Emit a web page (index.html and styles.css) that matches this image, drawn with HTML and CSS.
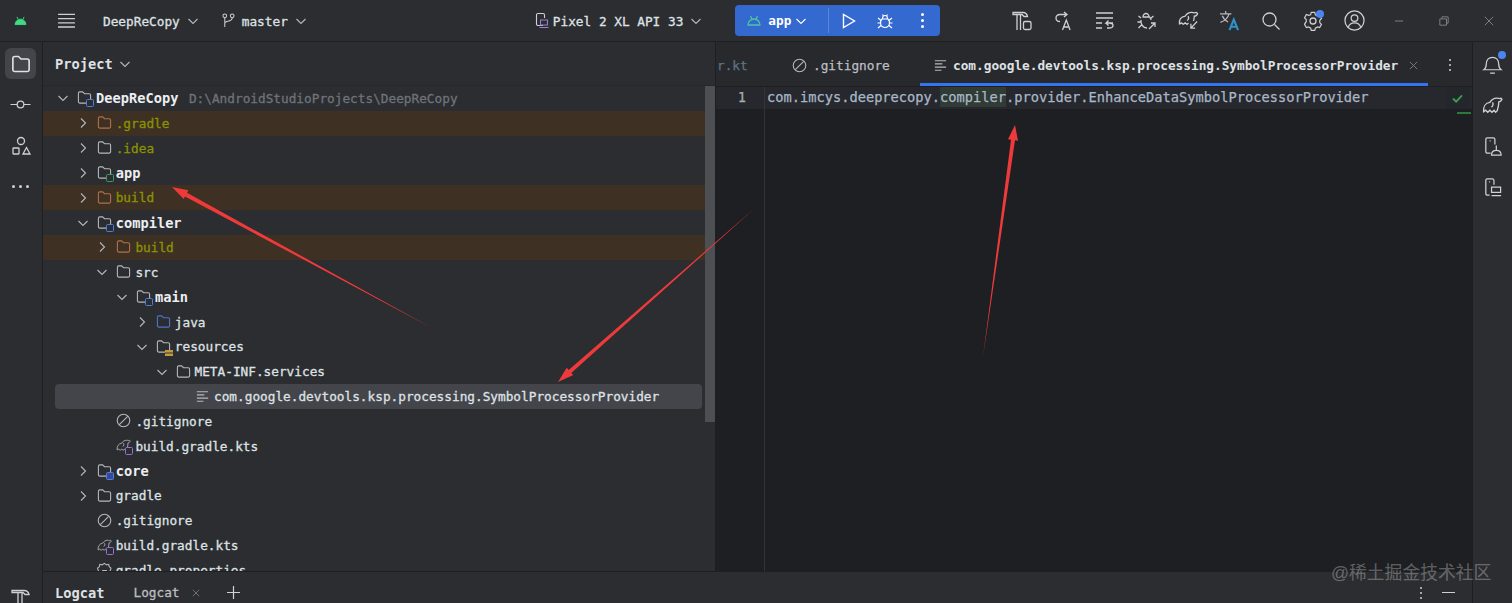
FILE: index.html
```html
<!DOCTYPE html>
<html lang="en">
<head>
<meta charset="utf-8">
<title>DeepReCopy</title>
<link rel="stylesheet" href="styles.css">
</head>
<body>
<svg class="sprite" xmlns="http://www.w3.org/2000/svg">
  <defs>
    <symbol id="chev-d" viewBox="0 0 12 12"><path d="M1.5 4l4.5 4.5L10.500 4"/></symbol>
    <symbol id="chev-r" viewBox="0 0 12 12"><path d="M4 1.500L8.500 6 4 10.500"/></symbol>
    <symbol id="folder" viewBox="0 0 16 16"><path d="M1.500 3.500a1.500 1.500 0 0 1 1.500-1.500h3l2 2h5a1.500 1.500 0 0 1 1.500 1.500v7a1.500 1.500 0 0 1-1.500 1.500h-10a1.500 1.500 0 0 1-1.500-1.500z"/></symbol>
    <symbol id="nope" viewBox="0 0 16 16"><circle cx="8" cy="8" r="6.700"/><path d="M3.500 12.500l9-9"/></symbol>
    <symbol id="lines" viewBox="0 0 16 16"><path d="M2 3h12M2 6.300h8M2 9.700h12M2 13h7"/></symbol>
    <symbol id="elephant" viewBox="0 0 20 20"><path d="M1.500 16C1 11 3.500 7.500 7.500 7 9 4.500 11.500 3 14 3c2 0 3 1 4 0l1 1c-.5 2-2 2.500-3 2.500 0 3-.5 5.500-1.500 8.500L13 16.500l-1.500-2-2 2-2-2-2 2-2-2zM10 7c1 1.500.5 3.500-1 4.500"/></symbol>
  </defs>
</svg>

<div class="app">
  <header class="topbar">
    <div class="logo-slot">
      <svg class="i-logo" viewBox="0 0 14 10"><path class="f-green" d="M1 9.500a6 6 0 0 1 12 0zM3 1l1.500 3M11 1L9.500 4"/></svg>
    </div>
    <svg class="i-menu" viewBox="0 0 18 16"><path d="M0 1.500h18M0 6h18M0 10.500h18M0 15h18"/></svg>
    <span class="tb-label project-name">DeepReCopy</span>
    <svg class="chev tb-chev"><use href="#chev-d"/></svg>
    <svg class="i-branch" viewBox="0 0 14 16"><circle cx="3" cy="3" r="2"/><circle cx="11" cy="3" r="2"/><path d="M3 5v10M3 11c0-3 8-1 8-6"/></svg>
    <span class="tb-label branch-name">master</span>
    <svg class="chev tb-chev"><use href="#chev-d"/></svg>
    <svg class="i-device" viewBox="0 0 14 16"><path d="M8 12.500H3a1.500 1.500 0 0 1-1.500-1.500V2A1.500 1.500 0 0 1 3 .5h5A1.500 1.500 0 0 1 9.500 2v3"/><path class="s-violet" d="M5.500 7h7v5h-7zM4.500 14.500h9"/></svg>
    <span class="tb-label device-name">Pixel 2 XL API 33</span>
    <svg class="chev tb-chev"><use href="#chev-d"/></svg>
    <div class="run-group">
      <svg class="i-run-android" viewBox="0 0 14 11"><path d="M1 10a6 6 0 0 1 12 0zM3.500 1l1.500 3M10.500 1L9 4"/></svg>
      <span class="run-label">app</span>
      <svg class="chev run-chev"><use href="#chev-d"/></svg>
      <span class="run-divider"></span>
      <svg class="i-play" viewBox="0 0 14 16"><path d="M1.500 1.500v13L12.500 8z"/></svg>
      <svg class="i-bug" viewBox="0 0 16 16"><path d="M5 6h6c1 1 1.500 2 1.500 3.500 0 3-2 5-4.500 5s-4.500-2-4.500-5C3.500 8 4 7 5 6zM5.500 6c0-2 1-3.500 2.500-3.500S10.500 4 10.500 6M1 5l2.500 2M15 5l-2.500 2M.5 10h3M15.500 10h-3M1 15l3-2.500M15 15l-3-2.500M5.500 1.500L6.500 3M10.500 1.500L9.500 3"/></svg>
      <span class="dots-v dots-run"><i></i><i></i><i></i></span>
    </div>
    <div class="tb-tools">
      <span class="tool"><svg class="i-20" viewBox="0 0 20 20"><path d="M1 1.500h10c2.500 0 4 1.500 4.500 4H12L10 3.500H6.500H1zM5 3.500V19M8.500 3.500V19"/><rect x="11.500" y="10.500" width="7.500" height="8" rx="1.500"/></svg></span>
      <span class="tool"><svg class="i-20" viewBox="0 0 20 20"><path d="M10 1l3 2.500L10 6M13 3.500H6c-3 0-4 2-4 3.500s1 3.500 4 3.500"/><path d="M8.500 19l3.800-10 3.800 10M9.800 16h5"/></svg></span>
      <span class="tool"><svg class="i-20" viewBox="0 0 20 20"><path d="M1 2h17M1 7h17M1 12h6M1 17h6M18 12h-7l2.500-2.500M11 12l2.500 2.500M14 12c3 0 4 .8 4 2.500S16.500 17 14 17h-2"/></svg></span>
      <span class="tool"><svg class="i-20" viewBox="0 0 20 20"><path d="M5.500 6h7c1 .8 1.500 2 1.500 3M6 6c0-2 1.500-3.500 3-3.500S12 4 12 6M1.500 5L4 7M16.500 5L14 7M.5 11h3M1.500 17L4.500 14M4 9c-.5 4 2 8 6 8M12 18l6-6M14 12h4v4"/></svg></span>
      <span class="tool"><svg class="i-22" viewBox="0 0 22 22"><path d="M1.500 15C1 10 3.500 7 7.500 6.500 9 4 11.500 2.500 14 2.500c2 0 3.500 1 5 0l1.500 1c-.5 2.500-2 3-3.500 3 0 2-.3 3.500-.8 5M1.500 15l2-1.500 2 1.500 2-1.500 2 1.500 1.500-1.500M10.500 6.500c1 1.500.5 3.500-1 4.500M20 12l-6.500 7M13.500 14.500V19H18"/></svg></span>
      <span class="tool"><svg class="i-22" viewBox="0 0 22 22"><path class="s-grey" d="M1 4h12M7 1v3M10.500 4c-1 4-4 7-9 9M3.500 6c1 3 3 5 6 6.500"/><path class="s-teal" d="M11 21l4.500-11 4.500 11M12.500 17.500h6"/></svg></span>
      <span class="tool"><svg class="i-20" viewBox="0 0 20 20"><circle cx="8.500" cy="8.500" r="6.500"/><path d="M13.500 13.500l5 5"/></svg></span>
      <span class="tool tool-badge"><svg class="i-20" viewBox="0 0 20 20"><path d="M8 1.500h4l.6 2.500 2.400 1.300 2.400-.8 2 3.500-1.900 1.800v2.400l1.900 1.800-2 3.500-2.400-.8-2.400 1.300-.6 2.500H8l-.6-2.500-2.400-1.300-2.400.8-2-3.500L2.500 11V9L.6 7.200l2-3.500 2.400.8L7.400 4z" transform="translate(1 0) scale(.9 .95)"/><circle cx="10" cy="10" r="3"/></svg><span class="badge badge-gear"></span></span>
      <span class="tool"><svg class="i-22" viewBox="0 0 22 22"><circle cx="11" cy="11" r="10"/><circle cx="11" cy="8.500" r="3.500"/><path d="M4.500 18c1-3.500 3.500-4.500 6.500-4.500s5.500 1 6.500 4.500"/></svg></span>
    </div>
    <div class="win-controls">
      <span class="win"><svg class="i-win" viewBox="0 0 12 12"><path d="M1 6h10"/></svg></span>
      <span class="win"><svg class="i-win" viewBox="0 0 12 12"><path d="M3.500 3V1h7.500v7.500H9M1 3.500h8v7.500H1z"/></svg></span>
      <span class="win"><svg class="i-win" viewBox="0 0 12 12"><path d="M1 1l10 10M11 1L1 11"/></svg></span>
    </div>
  </header>

  <div class="workspace">
    <nav class="strip strip-left">
      <span class="strip-btn strip-active"><svg class="i-20 s-bright" viewBox="0 0 16 16"><use href="#folder"/></svg></span>
      <span class="strip-btn"><svg class="i-22" viewBox="0 0 22 22"><circle cx="11" cy="11" r="3.500"/><path d="M.5 11h7M14.500 11h7"/></svg></span>
      <span class="strip-btn"><svg class="i-20" viewBox="0 0 20 20"><circle cx="10" cy="5" r="3.500"/><rect x="2" y="12" width="6" height="6" rx=".5"/><path d="M12 18l3.500-6.500L19 18z"/></svg></span>
      <span class="strip-btn"><span class="dots-h"><i></i><i></i><i></i></span></span>
      <span class="strip-fill"></span>
      <span class="strip-hammer"><svg class="i-20" viewBox="0 0 20 20"><path d="M1 3.500h12c3 0 4.500 1.500 5 4h-4l-2-2H1zM7 5.500V20M11 5.500V20"/></svg></span>
    </nav>

    <div class="center">
      <div class="panes">
        <section class="project">
          <div class="project-head">
            <span class="project-title">Project</span>
            <svg class="chev head-chev"><use href="#chev-d"/></svg>
          </div>
          <div class="tree-wrap">
            <div class="tree">
              <div class="row d0"><svg class="chev tree-chev"><use href="#chev-d"/></svg><span class="ico-box"><svg class="ico s-grey"><use href="#folder"/></svg><span class="mod mod-blue"></span></span><span class="name strong">DeepReCopy</span><span class="path">D:\AndroidStudioProjects\DeepReCopy</span></div>
              <div class="row d1 excluded"><svg class="chev tree-chev"><use href="#chev-r"/></svg><span class="ico-box"><svg class="ico s-orange"><use href="#folder"/></svg></span><span class="name olive">.gradle</span></div>
              <div class="row d1"><svg class="chev tree-chev"><use href="#chev-r"/></svg><span class="ico-box"><svg class="ico s-grey"><use href="#folder"/></svg></span><span class="name olive">.idea</span></div>
              <div class="row d1"><svg class="chev tree-chev"><use href="#chev-r"/></svg><span class="ico-box"><svg class="ico s-grey"><use href="#folder"/></svg><span class="mod mod-green"></span></span><span class="name strong">app</span></div>
              <div class="row d1 excluded"><svg class="chev tree-chev"><use href="#chev-r"/></svg><span class="ico-box"><svg class="ico s-orange"><use href="#folder"/></svg></span><span class="name olive">build</span></div>
              <div class="row d1"><svg class="chev tree-chev"><use href="#chev-d"/></svg><span class="ico-box"><svg class="ico s-grey"><use href="#folder"/></svg><span class="mod mod-blue"></span></span><span class="name strong">compiler</span></div>
              <div class="row d2 excluded"><svg class="chev tree-chev"><use href="#chev-r"/></svg><span class="ico-box"><svg class="ico s-orange"><use href="#folder"/></svg></span><span class="name olive">build</span></div>
              <div class="row d2"><svg class="chev tree-chev"><use href="#chev-d"/></svg><span class="ico-box"><svg class="ico s-grey"><use href="#folder"/></svg></span><span class="name">src</span></div>
              <div class="row d3"><svg class="chev tree-chev"><use href="#chev-d"/></svg><span class="ico-box"><svg class="ico s-grey"><use href="#folder"/></svg><span class="mod mod-blue"></span></span><span class="name strong">main</span></div>
              <div class="row d4"><svg class="chev tree-chev"><use href="#chev-r"/></svg><span class="ico-box"><svg class="ico s-blue"><use href="#folder"/></svg></span><span class="name">java</span></div>
              <div class="row d4"><svg class="chev tree-chev"><use href="#chev-d"/></svg><span class="ico-box"><svg class="ico s-grey"><use href="#folder"/></svg><span class="res"></span></span><span class="name">resources</span></div>
              <div class="row d5"><svg class="chev tree-chev"><use href="#chev-d"/></svg><span class="ico-box"><svg class="ico s-grey"><use href="#folder"/></svg></span><span class="name">META-INF.services</span></div>
              <div class="row selected"><span class="chev-gap"></span><span class="ico-box"><svg class="ico s-grey"><use href="#lines"/></svg></span><span class="name">com.google.devtools.ksp.processing.SymbolProcessorProvider</span></div>
              <div class="row d2"><span class="chev-gap"></span><span class="ico-box"><svg class="ico s-grey"><use href="#nope"/></svg></span><span class="name">.gitignore</span></div>
              <div class="row d2"><span class="chev-gap"></span><span class="ico-box"><svg class="ico s-grey"><use href="#elephant"/></svg><span class="mod mod-violet"></span></span><span class="name">build.gradle.kts</span></div>
              <div class="row d1"><svg class="chev tree-chev"><use href="#chev-r"/></svg><span class="ico-box"><svg class="ico s-grey"><use href="#folder"/></svg><span class="mod mod-blue mod-fill"></span></span><span class="name strong">core</span></div>
              <div class="row d1"><svg class="chev tree-chev"><use href="#chev-r"/></svg><span class="ico-box"><svg class="ico s-grey"><use href="#folder"/></svg></span><span class="name">gradle</span></div>
              <div class="row d1"><span class="chev-gap"></span><span class="ico-box"><svg class="ico s-grey"><use href="#nope"/></svg></span><span class="name">.gitignore</span></div>
              <div class="row d1"><span class="chev-gap"></span><span class="ico-box"><svg class="ico s-grey"><use href="#elephant"/></svg><span class="mod mod-violet"></span></span><span class="name">build.gradle.kts</span></div>
              <div class="row d1"><span class="chev-gap"></span><span class="ico-box"><svg class="ico s-grey" viewBox="0 0 16 16"><path d="M8 1.500l2 1.500 2.500-.5.500 2.500 2 1.500-1 2.500 1 2.500-2 1-.5 2.500H3l-.5-2.500-2-1 1-2.500-1-2.500 2-1.500.5-2.500 2.500.5zM6 14V9h4v5"/></svg></span><span class="name">gradle.properties</span></div>
            </div>
            <div class="scrollbar"></div>
          </div>
        </section>

        <section class="editor">
          <div class="tabs">
            <span class="tab tab-clipped">r.kt</span>
            <span class="tab tab-ignore"><svg class="ico s-grey"><use href="#nope"/></svg>.gitignore</span>
            <span class="tab tab-active"><svg class="ico s-grey"><use href="#lines"/></svg><span class="tab-strong">com.google.devtools.ksp.processing.SymbolProcessorProvider</span><svg class="i-close" viewBox="0 0 10 10"><path d="M1 1l8 8M9 1l-8 8"/></svg></span>
            <span class="dots-v dots-tabs"><i></i><i></i><i></i></span>
          </div>
          <div class="code">
            <div class="code-line">
              <span class="gutter">1</span>
              <span class="code-text">com.imcys.deeprecopy.<mark class="hit">compiler</mark>.provider.EnhanceDataSymbolProcessorProvider</span>
            </div>
            <div class="code-rest"><span class="gutter gutter-rest"></span></div>
            <span class="inspect"><svg class="i-check" viewBox="0 0 12 10"><path d="M1 5l3.500 3.500L11 1.500"/></svg></span>
            <span class="stripe"></span>
          </div>
        </section>
      </div>

      <footer class="bottom">
        <span class="bottom-title">Logcat</span>
        <span class="bottom-tab">Logcat</span>
        <svg class="i-close close-bottom" viewBox="0 0 10 10"><path d="M1 1l8 8M9 1l-8 8"/></svg>
        <svg class="i-plus" viewBox="0 0 14 14"><path d="M7 0v14M0 7h14"/></svg>
        <span class="bottom-fill"></span>
        <span class="dots-v"><i></i><i></i><i></i></span>
        <span class="minimize"></span>
      </footer>
    </div>

    <nav class="strip strip-right">
      <span class="strip-btn tool-badge"><svg class="i-22" viewBox="0 0 22 22"><path d="M2 16.500c2-1.500 2.500-3 2.500-6 0-4 2.500-7 6.500-7s6.500 3 6.500 7c0 3 .5 4.500 2.500 6zM8.500 20h5"/></svg><span class="badge badge-bell"></span></span>
      <span class="strip-btn"><svg class="i-22"><use href="#elephant"/></svg></span>
      <span class="strip-btn"><svg class="i-22" viewBox="0 0 22 22"><path d="M9 18H5.500A1.500 1.500 0 0 1 4 16.500v-13A1.500 1.500 0 0 1 5.500 2H12a1.500 1.500 0 0 1 1.500 1.500V9M8 5h1"/><path d="M10 20c0-3 2-5 5-5s5 2 5 5zM15 10v5"/></svg></span>
      <span class="strip-btn"><svg class="i-22" viewBox="0 0 22 22"><path d="M8 19H5.500A1.500 1.500 0 0 1 4 17.500v-14A1.500 1.500 0 0 1 5.500 2H11a1.500 1.500 0 0 1 1.500 1.500V8M7.500 5h1"/><path d="M10 10.500h9.500v5.500H10zM10 19.500h10"/></svg></span>
    </nav>
  </div>
</div>

<svg class="annotations" viewBox="0 0 1512 603" xmlns="http://www.w3.org/2000/svg">
  <polygon class="arrow" points="432,328 187,192.800 188.400,190.200 172,187 183.700,199 185,196.400"/>
  <polygon class="arrow" points="755,208 571.300,372.900 573.300,375.100 558,382 566.700,367.700 568.700,369.900"/>
  <polygon class="arrow" points="983,357 1015,140.300 1018,140.700 1015,125 1008,139.300 1011,139.700"/>
</svg>
<div class="watermark">@稀土掘金技术社区</div>
</body>
</html>
```

FILE: styles.css
```css
* { box-sizing: border-box; }
html, body { margin: 0; height: 603px; overflow: hidden; }
body {
  position: relative;
  background: #2b2d30;
  color: #dfe1e5;
  font-family: "DejaVu Sans Mono", "Liberation Mono", monospace;
  font-size: 12.750px;
}
svg { display: block; flex: none; fill: none; stroke: #ced0d6; stroke-width: 1.300; overflow: visible; }
.sprite { position: absolute; width: 0; height: 0; }
.app { display: flex; flex-direction: column; height: 603px; }

/* Title bar */
.topbar {
  display: flex;
  align-items: center;
  height: 42px;
  flex: none;
  border-bottom: 1px solid #1e1f22;
  background: #2b2d30;
}
.logo-slot { width: 58px; flex: none; padding-left: 14px; }
.i-logo { width: 13px; height: 9px; stroke: #3ddc84; }
.f-green { fill: #3ddc84; stroke: #3ddc84; stroke-width: 1; }
.i-menu { width: 17px; height: 15px; stroke: #ced0d6; stroke-width: 1.500; }
.tb-label { flex: none; padding-top: 1px; color: #dfe1e5; white-space: nowrap; -webkit-text-stroke: 0.300px #dfe1e5; }
.project-name { margin-left: 28px; }
.chev { width: 12px; height: 12px; stroke: #b4b8bf; stroke-width: 1.100; }
.tb-chev { margin-left: 7px; }
.i-branch { width: 13px; height: 15px; margin-left: 23px; stroke-width: 1.100; }
.branch-name { margin-left: 7px; }
.i-device { width: 14px; height: 16px; margin-left: 228px; stroke-width: 1.100; }
.s-violet { stroke: #9a7ecc; }
.device-name { margin-left: 4px; }
.run-group {
  display: flex;
  align-items: center;
  flex: none;
  width: 205px;
  height: 31px;
  margin-left: 33px;
  padding-left: 12px;
  border-radius: 4px;
  background: #3469cf;
}
.i-run-android { width: 14px; height: 11px; stroke: #4fc3a1; }
.run-label { margin-left: 7px; font-weight: 700; color: #fff; }
.run-chev { margin-left: 4px; stroke: #fff; }
.run-divider { width: 1px; height: 25px; margin-left: 21px; background: #5a86dc; }
.i-play { width: 14px; height: 16px; margin-left: 13px; stroke: #fff; stroke-width: 1.400; }
.i-bug { width: 16px; height: 16px; margin-left: 21px; stroke: #fff; stroke-width: 1.200; }
.dots-v { display: flex; flex-direction: column; gap: 3px; width: 3px; }
.dots-v i { display: block; width: 2px; height: 2px; background: #ced0d6; border-radius: 50%; }
.dots-run { margin-left: 28px; }
.dots-run i { width: 3px; height: 3px; background: #fff; }
.tb-tools { display: flex; flex: none; margin-left: 61px; }
.tool { position: relative; display: flex; justify-content: center; align-items: center; width: 41.500px; height: 41px; }
.i-20 { width: 20px; height: 20px; }
.i-22 { width: 21px; height: 21px; }
.s-grey { stroke: #b5b8bd; }
.s-teal { stroke: #2f93c9; stroke-width: 2.200; }
.s-bright { stroke: #dfe1e5; }
.tool-badge { position: relative; }
.badge { position: absolute; width: 8px; height: 8px; border-radius: 50%; background: #4b86f0; }
.badge-gear { top: 10px; left: 24px; }
.badge-bell { top: 7px; right: 6px; }
.win-controls { display: flex; flex: none; margin-left: 2px; }
.win { display: flex; justify-content: center; align-items: center; width: 45px; height: 41px; }
.i-win { width: 10px; height: 10px; stroke: #8c8e93; stroke-width: 1; }

/* Workspace */
.workspace { display: flex; flex: 1; min-height: 0; }
.strip { display: flex; flex-direction: column; align-items: center; flex: none; background: #2b2d30; }
.strip-left { width: 43px; padding-top: 6px; padding-right: 1px; border-right: 1px solid #1e1f22; }
.strip-right { width: 40px; padding-top: 2px; border-left: 1px solid #1e1f22; }
.strip-btn { position: relative; display: flex; justify-content: center; align-items: center; width: 31px; height: 31px; margin-bottom: 10px; border-radius: 6px; flex: none; }
.strip-active { background: #43454a; }
.strip-right .strip-btn { width: 39px; height: 41px; margin-bottom: 0; }
.dots-h { display: flex; gap: 4px; }
.dots-h i { display: block; width: 3px; height: 3px; border-radius: 50%; background: #ced0d6; }
.strip-fill { flex: 1; }
.strip-hammer { height: 16px; overflow: visible; }
.center { display: flex; flex-direction: column; flex: 1; min-width: 0; }
.panes { display: flex; flex: 1; min-height: 0; }

/* Project tree */
.project { display: flex; flex-direction: column; width: 673px; flex: none; border-right: 1px solid #1e1f22; background: #2b2d30; }
.project-head { display: flex; align-items: center; height: 44px; flex: none; padding-left: 12px; border-bottom: 1px solid #26282b; }
.project-title { font-size: 13.700px; font-weight: 700; }
.head-chev { margin-left: 6px; }
.tree-wrap { position: relative; flex: 1; min-height: 0; overflow: hidden; }
.tree { display: flex; flex-direction: column; }
.row { display: flex; align-items: center; height: 24.850px; flex: none; white-space: nowrap; }
.excluded { background: #3e3124; }
.selected { margin: 0 13px 0 12px; padding-left: 120px; border-radius: 4px; background: #43454a; }
.d0 { padding-left: 14px; }
.d1 { padding-left: 33.700px; }
.d2 { padding-left: 53.400px; }
.d3 { padding-left: 73.100px; }
.d4 { padding-left: 92.800px; }
.d5 { padding-left: 112.500px; }
.tree-chev { margin-right: 8px; }
.chev-gap { width: 20px; flex: none; }
.ico-box { position: relative; width: 15px; height: 16px; margin-right: 4px; flex: none; }
.ico { width: 15px; height: 15px; stroke-width: 1.150; }
.s-orange { stroke: #b0714a; }
.s-blue { stroke: #4a76c9; }
.mod { position: absolute; right: -2px; bottom: -1px; width: 8px; height: 8px; border: 1.400px solid #4f7fd6; border-radius: 1.500px; background: #2b2d30; }
.mod-green { border-color: #3e9a63; }
.mod-violet { border-color: #9a6dd7; }
.mod-fill { background: #35489a; }
.res { position: absolute; right: -2px; bottom: -1px; width: 8px; height: 6px; border-top: 2px solid #c39a3c; border-bottom: 2px solid #c39a3c; background: #7e6a37; }
.name { color: #dfe1e5; -webkit-text-stroke: 0.300px #dfe1e5; }
.strong { font-size: 13.700px; font-weight: 700; color: #eceef2; -webkit-text-stroke: 0; }
.olive { color: #8d9200; -webkit-text-stroke: 0.300px #8d9200; }
.path { margin-left: 10.500px; color: #6f737a; -webkit-text-stroke: 0.300px #6f737a; }
.scrollbar { position: absolute; top: 0; right: 0; width: 10px; height: 336px; background: #4e4f52; }

/* Editor */
.editor { position: relative; display: flex; flex-direction: column; flex: 1; min-width: 0; background: #1e1f22; }
.tabs { position: relative; display: flex; align-items: center; height: 45px; flex: none; padding-top: 2px; border-bottom: 1px solid #1e1f22; background: #27292d; overflow: hidden; }
.tab { display: flex; align-items: center; height: 100%; white-space: nowrap; -webkit-text-stroke: 0.250px currentColor; }
.tab-clipped { width: 76px; padding-left: 1px; color: #5e7385; }
.tab-ignore { width: 128px; gap: 6px; color: #bcbfc4; }
.tab-active { width: 508px; gap: 5px; padding: 3px 0 0 13px; border-bottom: 3px solid #3574f0; -webkit-text-stroke: 0; }
.tab-strong { font-weight: 700; color: #dfe1e5; }
.i-close { width: 9px; height: 9px; margin-left: 6px; stroke: #7e8187; stroke-width: 1; }
.dots-tabs { margin-left: 21px; }
.code { position: relative; flex: 1; display: flex; flex-direction: column; }
.code-line { display: flex; align-items: center; height: 22px; flex: none; background: #26282e; font-size: 13.700px; -webkit-text-stroke: 0.250px currentColor; }
.gutter { width: 49px; height: 100%; padding-right: 18px; line-height: 20px; text-align: right; color: #a8abb0; border-right: 1px solid #313438; flex: none; }
.code-text { margin-left: 2px; padding-bottom: 2px; color: #a9b7c6; white-space: pre; }
.hit { color: inherit; background: #2f3b34; padding: 2px 0; }
.code-rest { flex: 1; }
.gutter-rest { display: block; }
.inspect { position: absolute; top: 0; right: 3px; display: flex; align-items: center; justify-content: center; width: 23px; height: 22px; background: #23262a; }
.i-check { width: 11px; height: 9px; stroke: #3f9c52; stroke-width: 2; }
.stripe { position: absolute; top: 25px; right: 1px; width: 14px; height: 2px; background: #2a7a3c; }

/* Bottom bar */
.bottom { display: flex; align-items: center; height: 32px; flex: none; padding: 10px 0 0 12px; border-top: 1px solid #1e1f22; background: #2b2d30; overflow: hidden; }
.bottom-title { font-size: 13.700px; font-weight: 700; }
.bottom-tab { margin-left: 29px; color: #bcbfc4; -webkit-text-stroke: 0.300px #bcbfc4; }
.close-bottom { margin-left: 12px; width: 8px; height: 8px; }
.i-plus { width: 13px; height: 13px; margin-left: 27px; stroke: #ced0d6; }
.bottom-fill { flex: 1; }
.minimize { width: 13px; height: 1.500px; margin: 0 17px 0 19px; background: #ced0d6; }

/* Over-the-page annotations */
.annotations { position: absolute; top: 0; left: 0; width: 1512px; height: 603px; stroke: none; pointer-events: none; }
.arrow { fill: #ee3a3a; stroke: none; }
.watermark {
  position: absolute;
  top: 561px;
  left: 1331px;
  font-family: "Liberation Sans", "Noto Sans CJK SC", sans-serif;
  font-size: 17.800px;
  line-height: 24px;
  color: rgba(255, 255, 255, 0.3);
  white-space: nowrap;
}
```
